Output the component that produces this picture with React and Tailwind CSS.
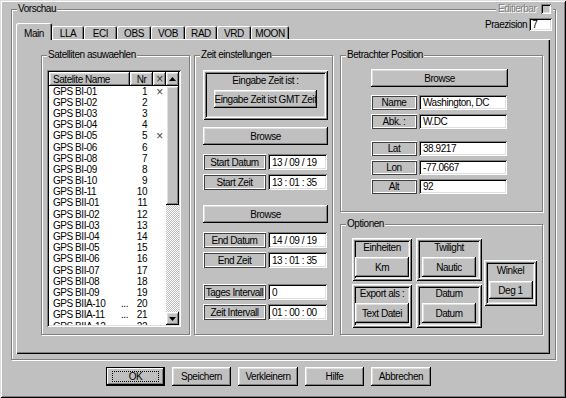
import React from 'react';

// Win95 style bevels
const raised =
  'bg-[#c0c0c0] shadow-[inset_-1px_-1px_#000,inset_1px_1px_#fff,inset_-2px_-2px_#808080,inset_2px_2px_#dfdfdf]';
const sunken =
  'bg-white shadow-[inset_1px_1px_#808080,inset_-1px_-1px_#fff,inset_2px_2px_#000,inset_-2px_-2px_#dfdfdf]';
const labelBox =
  'shadow-[inset_1px_1px_#fff,inset_-1px_-1px_#404040,inset_2px_2px_#404040,inset_-2px_-2px_#fff]';
const frameBox =
  'shadow-[inset_1px_1px_#fff,inset_-1px_-1px_#000,inset_2px_2px_#dfdfdf,inset_-2px_-2px_#808080,inset_3px_3px_#808080,inset_-3px_-3px_#fff,inset_4px_4px_#000,inset_-4px_-4px_#dfdfdf]';

const satellites = [
  ['GPS BI-01', false, 1, true],
  ['GPS BI-02', false, 2],
  ['GPS BI-03', false, 3],
  ['GPS BI-04', false, 4],
  ['GPS BI-05', false, 5, true],
  ['GPS BI-06', false, 6],
  ['GPS BI-08', false, 7],
  ['GPS BI-09', false, 8],
  ['GPS BI-10', false, 9],
  ['GPS BI-11', false, 10],
  ['GPS BII-01', false, 11],
  ['GPS BII-02', false, 12],
  ['GPS BII-03', false, 13],
  ['GPS BII-04', false, 14],
  ['GPS BII-05', false, 15],
  ['GPS BII-06', false, 16],
  ['GPS BII-07', false, 17],
  ['GPS BII-08', false, 18],
  ['GPS BII-09', false, 19],
  ['GPS BIIA-10', true, 20],
  ['GPS BIIA-11', true, 21],
  ['GPS BIIA-12', true, 22],
];

const tabs = [
  ['Main', 36],
  ['LLA', 32],
  ['ECI', 33],
  ['OBS', 34],
  ['VOB', 34],
  ['RAD', 32],
  ['VRD', 34],
  ['MOON', 38],
];

function Group({ label, className, children }) {
  return (
    <div
      className={`relative border border-[#808080] shadow-[1px_1px_0_#fff,inset_1px_1px_0_#fff] ${className}`}
    >
      <span className="absolute left-[5px] top-[-8px] bg-[#c0c0c0] px-px leading-[14px]">
        {label}
      </span>
      {children}
    </div>
  );
}

function Button({ children, className = '' }) {
  return (
    <div className={`flex items-center justify-center ${raised} ${className}`}>
      {children}
    </div>
  );
}

function Field({ label, value, h, lw, iw }) {
  return (
    <div className={`flex gap-[2px] ${h}`}>
      <div className={`flex items-center justify-center ${lw} ${labelBox}`}>{label}</div>
      <div className={`flex items-center pl-[4px] ${iw} ${sunken}`}>{value}</div>
    </div>
  );
}

function OptBox({ label, value }) {
  return (
    <div className={`flex flex-col items-center pt-[3px] ${frameBox}`}>
      <span className="leading-[13px]">{label}</span>
      <Button className="mt-[3px] h-[20px] w-[54px]">{value}</Button>
    </div>
  );
}

function Arrow({ up }) {
  return (
    <svg width="7" height="4" viewBox="0 0 7 4">
      <polygon points={up ? '3.5,0 7,4 0,4' : '0,0 7,0 3.5,4'} fill="#000" />
    </svg>
  );
}

function SatList() {
  return (
    <div className={`ml-[5px] mt-[14px] flex h-[257px] w-[134px] p-[2px] ${sunken}`}>
      <div className="flex w-[117px] flex-col overflow-hidden">
        <div className="flex h-[14px] shrink-0">
          <div className={`flex w-[81px] items-center pl-[4px] ${raised}`}>Satelite Name</div>
          <div className={`flex w-[23px] items-center justify-center ${raised}`}>Nr</div>
          <div className={`flex w-[13px] items-center justify-center text-[12px] leading-none text-[#333] ${raised}`}>×</div>
        </div>
        {satellites.map(([name, dots, nr, x]) => (
          <div key={name} className="flex h-[11.2px] shrink-0 items-center leading-none">
            <div className="flex w-[81px] justify-between pl-[4px] pr-[2px]">
              <span>{name}</span>
              {dots && <span>...</span>}
            </div>
            <div className="w-[23px] pr-[6px] text-right">{nr}</div>
            <div className="w-[13px] text-center text-[12px] leading-none text-[#444]">{x ? '×' : ''}</div>
          </div>
        ))}
      </div>
      <div className="flex w-[13px] flex-col">
        <Button className="h-[14px]">
          <Arrow up />
        </Button>
        <div className={`h-[119px] ${raised}`} />
        <div className="flex-1 bg-[repeating-conic-gradient(#fff_0_25%,#c0c0c0_0_50%)] bg-[length:2px_2px]" />
        <Button className="h-[13px]">
          <Arrow />
        </Button>
      </div>
    </div>
  );
}

function ZeitGroup() {
  const f = { h: 'h-[16px]', lw: 'w-[63px]', iw: 'w-[59px]' };
  return (
    <Group label="Zeit einstellungen" className="h-[280px] w-[139px]">
      <div className="ml-[8px] mt-[14px] flex w-[125px] flex-col">
        <div className={`flex h-[50px] flex-col items-center pt-[4px] ${frameBox}`}>
          <span className="leading-[14px]">Eingabe Zeit ist :</span>
          <Button className="mt-[2px] h-[18px] w-[103px]">Eingabe Zeit ist GMT Zeit</Button>
        </div>
        <Button className="mt-[7px] h-[18px]">Browse</Button>
        <div className="mt-[9px] flex flex-col gap-[4px]">
          <Field label="Start Datum" value="13 / 09 / 19" {...f} />
          <Field label="Start Zeit" value="13 : 01 : 35" {...f} />
        </div>
        <Button className="mt-[15px] h-[18px]">Browse</Button>
        <div className="mt-[9px] flex flex-col gap-[4px]">
          <Field label="End Datum" value="14 / 09 / 19" {...f} />
          <Field label="End Zeit" value="13 : 01 : 35" {...f} />
        </div>
        <div className="mt-[16px] flex flex-col gap-[4px]">
          <Field label="Tages Intervall" value="0" {...f} />
          <Field label="Zeit Intervall" value="01 : 00 : 00" {...f} />
        </div>
      </div>
    </Group>
  );
}

function RightColumn() {
  const f = { h: 'h-[15px]', lw: 'w-[46px]', iw: 'w-[88px]' };
  return (
    <div className="flex w-[203px] flex-col">
      <Group label="Betrachter Position" className="h-[157px]">
        <div className="ml-[30px] mt-[13px] flex w-[137px] flex-col">
          <Button className="h-[18px]">Browse</Button>
          <div className="mt-[8px] flex flex-col gap-[4px]">
            <Field label="Name" value="Washington, DC" {...f} />
            <Field label="Abk. :" value="W.DC" {...f} />
          </div>
          <div className="mt-[12px] flex flex-col gap-[4px]">
            <Field label="Lat" value="38.9217" {...f} />
            <Field label="Lon" value="-77.0667" {...f} />
            <Field label="Alt" value="92" {...f} />
          </div>
        </div>
      </Group>
      <Group label="Optionen" className="mt-[12px] h-[111px]">
        <div className="ml-[11px] mt-[13px] flex items-center">
          <div className="grid grid-cols-[60px_66px] grid-rows-[43px_44px] gap-x-[4px] gap-y-[3px]">
            <OptBox label="Einheiten" value="Km" />
            <OptBox label="Twilight" value="Nautic" />
            <OptBox label="Export als :" value="Text Datei" />
            <OptBox label="Datum" value="Datum" />
          </div>
          <div className={`ml-[2px] flex h-[46px] w-[53px] flex-col items-center pt-[4px] ${frameBox}`}>
            <span className="leading-[13px]">Winkel</span>
            <Button className="mt-[4px] h-[18px] w-[44px]">Deg 1</Button>
          </div>
        </div>
      </Group>
    </div>
  );
}

export default function App() {
  return (
    <div className="relative h-[398px] w-[566px] overflow-hidden bg-[#c0c0c0] pl-[11px] pt-[9px] font-['Liberation_Sans',Arial,sans-serif] text-[10px] leading-[13px] tracking-[-0.45px] text-black shadow-[inset_1px_1px_#dfdfdf,inset_-1px_-1px_#000,inset_2px_2px_#fff,inset_-2px_-2px_#808080]">
      <Group label="Vorschau" className="h-[351px] w-[545px]">
        <div className="ml-[4px] mt-[13px] flex h-[16px] items-end">
          {tabs.map(([name, w], i) => (
            <div
              key={name}
              style={{ width: w }}
              className={`flex justify-center rounded-t-[2px] bg-[#c0c0c0] shadow-[inset_1px_1px_#fff,inset_-1px_0_#000,inset_-2px_0_#808080] ${
                i === 0 ? 'relative z-10 -mb-px h-[17px] pt-[4px]' : 'h-[13px] pt-[1px]'
              }`}
            >
              {name}
            </div>
          ))}
        </div>
        <div className="ml-[4px] h-[315px] w-[534px] shadow-[inset_1px_1px_#fff,inset_-1px_-1px_#000,inset_-2px_-2px_#808080]">
          <div className="flex pl-[25px] pt-[16px]">
            <Group label="Satelliten asuwaehlen" className="h-[280px] w-[149px]">
              <SatList />
            </Group>
            <div className="ml-[4px]">
              <ZeitGroup />
            </div>
            <div className="ml-[7px]">
              <RightColumn />
            </div>
          </div>
        </div>
      </Group>

      <div className="absolute left-[496px] top-[2px] flex items-center gap-[5px] bg-[#c0c0c0] px-[2px]">
        <span className="text-[#808080] [text-shadow:1px_1px_0_#fff]">Editierbar</span>
        <div className="h-[10px] w-[10px] bg-[#c0c0c0] shadow-[inset_1px_1px_#808080,inset_-1px_-1px_#fff,inset_2px_2px_#000,inset_-2px_-2px_#dfdfdf]" />
      </div>
      <div className="absolute left-[485px] top-[18px] flex items-center gap-[2px]">
        <span>Praezision</span>
        <div className={`flex h-[13px] w-[23px] items-center pl-[3px] ${sunken}`}>7</div>
      </div>

      <div className="ml-[95px] mt-[7px] flex gap-[7px]">
        <div className="flex h-[19px] w-[59px] items-center justify-center border border-black bg-[#c0c0c0] shadow-[inset_-1px_-1px_#000,inset_1px_1px_#fff,inset_-2px_-2px_#808080]">
          <div className="flex h-[11px] w-[47px] items-center justify-center border border-dotted border-black">
            OK
          </div>
        </div>
        <Button className="h-[19px] w-[59px]">Speichern</Button>
        <Button className="h-[19px] w-[60px]">Verkleinern</Button>
        <Button className="h-[19px] w-[59px]">Hilfe</Button>
        <Button className="h-[19px] w-[60px]">Abbrechen</Button>
      </div>
    </div>
  );
}
